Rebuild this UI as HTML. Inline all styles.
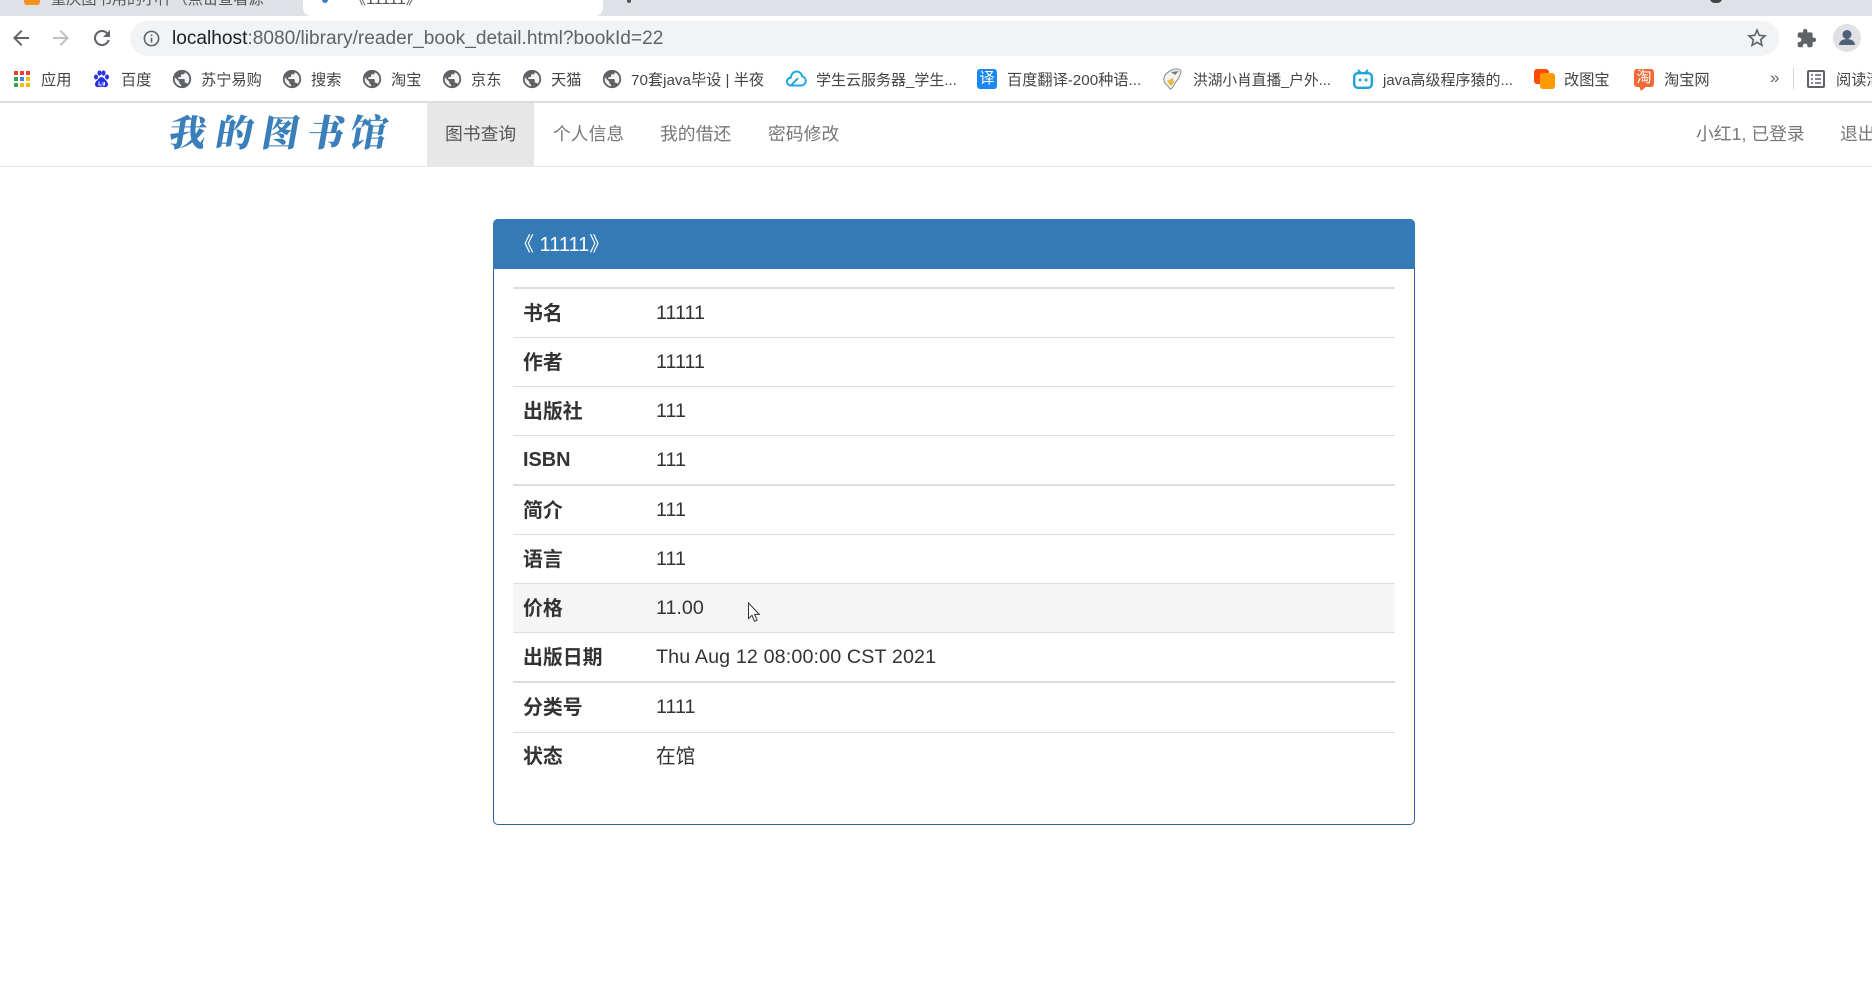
<!DOCTYPE html>
<html lang="zh-CN"><head><meta charset="utf-8"><title>《11111》</title>
<style>
html,body{margin:0;padding:0;background:#fff;width:1872px;height:1000px;overflow:hidden}
body{position:relative;font-family:"Liberation Sans","Noto Sans CJK SC",sans-serif;color:#333;filter:blur(.3px)}
.a{position:absolute;white-space:nowrap}
.bm{position:absolute;top:70px;height:22px;line-height:22px;font-size:15.2px;color:#444;white-space:nowrap}
.ic{position:absolute;display:block}
.nav{position:absolute;top:103px;height:63px;line-height:62px;font-size:17.8px;color:#777;white-space:nowrap}
.line{position:absolute;left:513px;width:882px;background:#ddd;height:1px}
.th{position:absolute;left:523px;font-size:19.9px;font-weight:700;line-height:30px;height:30px;color:#333;white-space:nowrap}
.td{position:absolute;left:656px;font-size:19.7px;line-height:30px;height:30px;color:#333;white-space:nowrap}
.logo{position:absolute;top:105px;font-family:"Noto Serif CJK SC","Liberation Serif",serif;font-weight:900;font-size:37px;line-height:50px;color:#3a7fba;transform:skewX(-10deg)}
</style></head><body>

<!-- tab strip -->
<div class="a" style="left:0;top:0;width:1872px;height:16px;background:#dee1e6;overflow:hidden">
  <div class="a" style="left:303px;top:0;width:300px;height:16px;background:#fff;border-radius:0 0 8px 8px"></div>
  <div class="a" style="left:24px;top:0;width:16px;height:5px;background:#f5911e;border-radius:0 0 3px 3px"></div>
  <div class="a" style="left:51px;top:-10px;font-size:15.2px;line-height:20px;color:#555">重庆图书用的小件（点击查看源</div>
  <div class="a" style="left:322px;top:-4px;width:6px;height:7px;background:#3f7fbf;border-radius:3px"></div>
  <div class="a" style="left:350px;top:-10px;font-size:16px;line-height:20px;color:#555">《11111》</div>
  <div class="a" style="left:627px;top:-4px;width:4px;height:7px;background:#555;border-radius:2px"></div>
  <div class="a" style="left:1710px;top:-6px;width:12px;height:9px;background:#444;border-radius:6px"></div>
</div>

<!-- toolbar -->
<svg class="ic" style="left:9px;top:26px" width="24" height="24" viewBox="0 0 24 24"><path d="M20 11H7.800l5.600-5.600L12 4l-8 8 8 8 1.400-1.400L7.800 13H20z" fill="#5f6368"/></svg>
<svg class="ic" style="left:49px;top:26px" width="24" height="24" viewBox="0 0 24 24"><path d="M4 11h12.200l-5.600-5.600L12 4l8 8-8 8-1.400-1.400 5.600-5.600H4z" fill="#bdc1c6"/></svg>
<svg class="ic" style="left:90px;top:26px" width="24" height="24" viewBox="0 0 24 24"><path d="M17.650 6.350A7.960 7.960 0 0 0 12 4a8 8 0 1 0 7.730 10h-2.080A6 6 0 1 1 12 6c1.660 0 3.140.69 4.220 1.780L13 11h7V4z" fill="#5f6368"/></svg>
<div class="a" style="left:130px;top:21px;width:1649px;height:35px;background:#f1f3f4;border-radius:18px"></div>
<svg class="ic" style="left:142px;top:29px" width="19" height="19" viewBox="0 0 24 24"><path d="M11 7h2v2h-2zm0 4h2v6h-2zm1-9a10 10 0 1 0 0 20 10 10 0 0 0 0-20zm0 18a8 8 0 1 1 0-16 8 8 0 0 1 0 16z" fill="#5f6368"/></svg>
<div class="a" style="left:172px;top:27px;font-size:19.13px;line-height:24px;color:#5f6368"><span style="color:#202124">localhost</span>:8080/library/reader_book_detail.html?bookId=22</div>
<svg class="ic" style="left:1745px;top:26px" width="24" height="24" viewBox="0 0 24 24"><path d="M22 9.240l-7.190-.62L12 2 9.190 8.630 2 9.240l5.460 4.730L5.820 21 12 17.270 18.180 21l-1.630-7.030L22 9.240zM12 15.400l-3.760 2.270 1-4.280-3.320-2.880 4.380-.38L12 6.100l1.710 4.040 4.380.38-3.320 2.880 1 4.280L12 15.400z" fill="#5f6368"/></svg>
<svg class="ic" style="left:1796px;top:28px" width="21" height="21" viewBox="0 0 24 24"><path d="M20.500 11H19V7c0-1.100-.9-2-2-2h-4V3.500a2.500 2.500 0 0 0-5 0V5H4c-1.100 0-2 .9-2 2v3.800h1.500a2.700 2.700 0 0 1 0 5.400H2V20c0 1.100.9 2 2 2h3.800v-1.500a2.700 2.700 0 0 1 5.400 0V22H17c1.100 0 2-.9 2-2v-4h1.500a2.500 2.500 0 0 0 0-5z" fill="#5f6368"/></svg>
<svg class="ic" style="left:1833px;top:24px" width="28" height="28" viewBox="0 0 28 28"><circle cx="14" cy="14" r="14" fill="#dfe1e5"/><circle cx="14" cy="10.500" r="4.500" fill="#4d6178"/><path d="M6 21c0-4 4-6 8-6s8 2 8 6z" fill="#4d6178"/></svg>

<!-- bookmarks bar -->
<svg class="ic" style="left:13px;top:70px" width="18" height="18" viewBox="0 0 18 18"><g><rect x="1" y="1" width="4" height="4" fill="#ea4335"/><rect x="7" y="1" width="4" height="4" fill="#ea4335"/><rect x="13" y="1" width="4" height="4" fill="#ea4335"/><rect x="1" y="7" width="4" height="4" fill="#34a853"/><rect x="7" y="7" width="4" height="4" fill="#4285f4"/><rect x="13" y="7" width="4" height="4" fill="#fbbc05"/><rect x="1" y="13" width="4" height="4" fill="#34a853"/><rect x="7" y="13" width="4" height="4" fill="#fbbc05"/><rect x="13" y="13" width="4" height="4" fill="#fbbc05"/></g></svg>
<div class="bm" style="left:41px">应用</div>
<svg class="ic" style="left:93px;top:70px" width="17" height="18" viewBox="0 0 17 18"><g fill="#2932e1"><ellipse cx="3" cy="7" rx="2" ry="2.500"/><ellipse cx="6.500" cy="3" rx="2" ry="2.600"/><ellipse cx="10.500" cy="3" rx="2" ry="2.600"/><ellipse cx="14" cy="7" rx="2" ry="2.500"/><path d="M8.500 7c-2 0-3 2-4.500 3.500C2.500 12 2 13 2 14.500 2 16.500 4 17.500 6 17c1-.2 1.700-.3 2.500-.3s1.500.1 2.500.3c2 .5 4-.5 4-2.500 0-1.500-.5-2.500-2-4C11.500 9 10.500 7 8.500 7z"/></g><path d="M6 11.500v3.500h2.500M10 12v2.500c0 .8 1.500.8 1.500 0V12" stroke="#fff" stroke-width="1" fill="none"/></svg>
<div class="bm" style="left:121px">百度</div>

<svg class="ic" style="left:171px;top:68px" width="22" height="22" viewBox="0 0 24 24"><circle cx="12" cy="12" r="10" fill="#5f6368"/><path d="M11 19.930c-3.950-.49-7-3.850-7-7.930 0-.62.08-1.210.21-1.790L9 15v1c0 1.100.9 2 2 2zm6.900-2.540c-.26-.81-1-1.390-1.900-1.390h-1v-3c0-.55-.45-1-1-1H8v-2h2c.55 0 1-.45 1-1V7h2c1.100 0 2-.9 2-2v-.41c2.930 1.190 5 4.060 5 7.410 0 2.080-.8 3.970-2.100 5.390z" fill="#f4f4f4"/></svg>
<div class="bm" style="left:201px">苏宁易购</div>
<svg class="ic" style="left:281px;top:68px" width="22" height="22" viewBox="0 0 24 24"><circle cx="12" cy="12" r="10" fill="#5f6368"/><path d="M11 19.930c-3.950-.49-7-3.850-7-7.930 0-.62.08-1.210.21-1.790L9 15v1c0 1.100.9 2 2 2zm6.900-2.540c-.26-.81-1-1.390-1.900-1.390h-1v-3c0-.55-.45-1-1-1H8v-2h2c.55 0 1-.45 1-1V7h2c1.100 0 2-.9 2-2v-.41c2.930 1.190 5 4.060 5 7.410 0 2.080-.8 3.970-2.100 5.390z" fill="#f4f4f4"/></svg>
<div class="bm" style="left:311px">搜索</div>
<svg class="ic" style="left:361px;top:68px" width="22" height="22" viewBox="0 0 24 24"><circle cx="12" cy="12" r="10" fill="#5f6368"/><path d="M11 19.930c-3.950-.49-7-3.850-7-7.930 0-.62.08-1.210.21-1.790L9 15v1c0 1.100.9 2 2 2zm6.900-2.540c-.26-.81-1-1.390-1.900-1.390h-1v-3c0-.55-.45-1-1-1H8v-2h2c.55 0 1-.45 1-1V7h2c1.100 0 2-.9 2-2v-.41c2.930 1.190 5 4.060 5 7.410 0 2.080-.8 3.970-2.100 5.390z" fill="#f4f4f4"/></svg>
<div class="bm" style="left:391px">淘宝</div>
<svg class="ic" style="left:441px;top:68px" width="22" height="22" viewBox="0 0 24 24"><circle cx="12" cy="12" r="10" fill="#5f6368"/><path d="M11 19.930c-3.950-.49-7-3.850-7-7.930 0-.62.08-1.210.21-1.790L9 15v1c0 1.100.9 2 2 2zm6.900-2.540c-.26-.81-1-1.390-1.900-1.390h-1v-3c0-.55-.45-1-1-1H8v-2h2c.55 0 1-.45 1-1V7h2c1.100 0 2-.9 2-2v-.41c2.930 1.190 5 4.060 5 7.410 0 2.080-.8 3.970-2.100 5.390z" fill="#f4f4f4"/></svg>
<div class="bm" style="left:471px">京东</div>
<svg class="ic" style="left:521px;top:68px" width="22" height="22" viewBox="0 0 24 24"><circle cx="12" cy="12" r="10" fill="#5f6368"/><path d="M11 19.930c-3.950-.49-7-3.850-7-7.930 0-.62.08-1.210.21-1.790L9 15v1c0 1.100.9 2 2 2zm6.900-2.540c-.26-.81-1-1.390-1.900-1.390h-1v-3c0-.55-.45-1-1-1H8v-2h2c.55 0 1-.45 1-1V7h2c1.100 0 2-.9 2-2v-.41c2.930 1.190 5 4.060 5 7.410 0 2.080-.8 3.970-2.100 5.390z" fill="#f4f4f4"/></svg>
<div class="bm" style="left:551px">天猫</div>
<svg class="ic" style="left:601px;top:68px" width="22" height="22" viewBox="0 0 24 24"><circle cx="12" cy="12" r="10" fill="#5f6368"/><path d="M11 19.930c-3.950-.49-7-3.850-7-7.930 0-.62.08-1.210.21-1.790L9 15v1c0 1.100.9 2 2 2zm6.900-2.540c-.26-.81-1-1.390-1.900-1.390h-1v-3c0-.55-.45-1-1-1H8v-2h2c.55 0 1-.45 1-1V7h2c1.100 0 2-.9 2-2v-.41c2.930 1.190 5 4.060 5 7.410 0 2.080-.8 3.970-2.100 5.390z" fill="#f4f4f4"/></svg>
<div class="bm" style="left:631px">70套java毕设 | 半夜</div>

<svg class="ic" style="left:786px;top:70px" width="21" height="17" viewBox="0 0 21 17"><path d="M5 15.500a3.900 3.900 0 0 1-.3-7.800C5.300 4 7.600 1.500 10.500 1.500c3 0 5.200 2.200 5.600 4.800a4.700 4.700 0 0 1-.3 9.200zM5 15.500L12 8.200" fill="none" stroke="#22a7e0" stroke-width="2"/></svg>
<div class="bm" style="left:816px;font-size:15px">学生云服务器_学生...</div>

<div class="a" style="left:977px;top:69px;width:20px;height:20px;background:#1b87f0;border-radius:3px;color:#fff;font-size:15px;line-height:20px;text-align:center">译</div>
<div class="bm" style="left:1007px">百度翻译-200种语...</div>

<svg class="ic" style="left:1162px;top:68px" width="21" height="23" viewBox="0 0 21 23"><path d="M14 1c3 0 5 1 5 3-1 4-3 8-6 11-1 3-3 6-5 6-1-2-2-3-5-6C1 12 2 8 4 6c3-3 7-5 10-5z" fill="#f2f2f2" stroke="#888" stroke-width="1"/><path d="M5 13l6-3 1 5-3 3z" fill="#e8b93a"/><path d="M9 4l8-1-4 4z" fill="#777"/></svg>
<div class="bm" style="left:1193px;font-size:14.7px">洪湖小肖直播_户外...</div>

<svg class="ic" style="left:1353px;top:69px" width="20" height="20" viewBox="0 0 20 20"><path d="M5 1l3 3M15 1l-3 3" stroke="#20a3d8" stroke-width="2"/><rect x="1.200" y="4.200" width="17.600" height="14.600" rx="3.500" fill="none" stroke="#20a3d8" stroke-width="2.400"/><circle cx="7" cy="11" r="1.500" fill="#20a3d8"/><circle cx="13" cy="11" r="1.500" fill="#20a3d8"/></svg>
<div class="bm" style="left:1383px;font-size:15px">java高级程序猿的...</div>

<svg class="ic" style="left:1534px;top:69px" width="21" height="20" viewBox="0 0 21 20"><rect x="0" y="0" width="15" height="15" rx="3" fill="#ff4b0d"/><rect x="6" y="4" width="15" height="16" rx="3" fill="#ff9a00"/></svg>
<div class="bm" style="left:1564px">改图宝</div>

<div class="a" style="left:1634px;top:69px;width:20px;height:18px;background:#f06a35;border-radius:3px;color:#fff;font-size:15px;line-height:18px;text-align:center">淘</div>
<svg class="ic" style="left:1639px;top:86px" width="8" height="5" viewBox="0 0 8 5"><path d="M0 0h8L2 5z" fill="#f06a35"/></svg>
<div class="bm" style="left:1664px">淘宝网</div>

<div class="a" style="left:1770px;top:67px;font-size:17px;line-height:22px;color:#5f6368">»</div>
<div class="a" style="left:1793px;top:68px;width:1px;height:21px;background:#d8d8d8"></div>
<svg class="ic" style="left:1807px;top:70px" width="18" height="18" viewBox="0 0 18 18"><rect x="1" y="1" width="16" height="16" rx="1" fill="none" stroke="#5f6368" stroke-width="2"/><path d="M4 5h2M8 5h6M4 9h2M8 9h6M4 13h2M8 13h6" stroke="#5f6368" stroke-width="1.500"/></svg>
<div class="bm" style="left:1836px">阅读清单</div>

<div class="a" style="left:0;top:101px;width:1872px;height:2px;background:#dcdcdc"></div>

<!-- navbar -->
<div class="a" style="left:0;top:166px;width:1872px;height:1px;background:#e7e7e7"></div>
<div class="a" style="left:427px;top:103px;width:107px;height:63px;background:#e7e7e7"></div>
<div class="logo" style="left:170px">我</div>
<div class="logo" style="left:217px">的</div>
<div class="logo" style="left:263px">图</div>
<div class="logo" style="left:308px">书</div>
<div class="logo" style="left:351px">馆</div>
<div class="nav" style="left:445px;color:#555">图书查询</div>
<div class="nav" style="left:553px">个人信息</div>
<div class="nav" style="left:660px">我的借还</div>
<div class="nav" style="left:768px">密码修改</div>
<div class="nav" style="left:1696px">小红1, 已登录</div>
<div class="nav" style="left:1840px">退出</div>

<!-- panel -->
<div class="a" style="left:493px;top:219px;width:920px;height:604px;border:1px solid #2f659a;border-radius:5px"></div>
<div class="a" style="left:493px;top:219px;width:922px;height:50px;background:#337ab7;border-radius:5px 5px 0 0"></div>
<div class="a" style="left:514px;top:230px;font-size:20px;line-height:30px;color:#fff">《 11111》</div>

<div class="line" style="top:287px;height:2px"></div>
<div class="line" style="top:337px"></div>
<div class="line" style="top:386px"></div>
<div class="line" style="top:435px"></div>
<div class="line" style="top:484px;height:2px"></div>
<div class="line" style="top:534px"></div>
<div class="a" style="left:513px;top:584px;width:882px;height:48px;background:#f5f5f5"></div>
<div class="line" style="top:583px"></div>
<div class="line" style="top:632px"></div>
<div class="line" style="top:681px;height:2px"></div>
<div class="line" style="top:732px"></div>

<div class="th" style="top:299px">书名</div><div class="td" style="top:298px">11111</div>
<div class="th" style="top:348px">作者</div><div class="td" style="top:347px">11111</div>
<div class="th" style="top:397px">出版社</div><div class="td" style="top:396px">111</div>
<div class="th" style="top:445px">ISBN</div><div class="td" style="top:445px">111</div>
<div class="th" style="top:496px">简介</div><div class="td" style="top:495px">111</div>
<div class="th" style="top:545px">语言</div><div class="td" style="top:544px">111</div>
<div class="th" style="top:594px">价格</div><div class="td" style="top:593px">11.00</div>
<div class="th" style="top:643px">出版日期</div><div class="td" style="top:642px;letter-spacing:.13px">Thu Aug 12 08:00:00 CST 2021</div>
<div class="th" style="top:693px">分类号</div><div class="td" style="top:692px">1111</div>
<div class="th" style="top:742px">状态</div><div class="td" style="top:742px">在馆</div>

<!-- cursor -->
<svg class="ic" style="left:747px;top:602px" width="14" height="21" viewBox="0 0 14 21"><path d="M1.500 1v15.500l3.500-3.200 2.500 6 2.600-1.100-2.500-5.800h4.700z" fill="#fff" stroke="#333" stroke-width="1"/></svg>

</body></html>
